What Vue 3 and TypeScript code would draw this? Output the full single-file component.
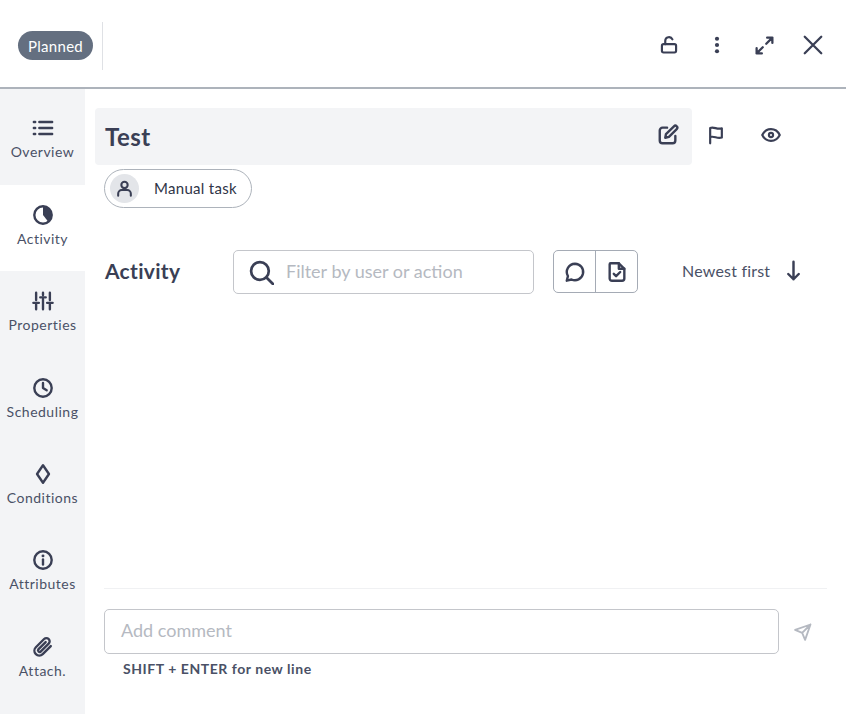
<script setup lang="ts">
const tabs: { key: string; label: string }[] = [
  { key: 'overview', label: 'Overview' },
  { key: 'activity', label: 'Activity' },
  { key: 'properties', label: 'Properties' },
  { key: 'scheduling', label: 'Scheduling' },
  { key: 'conditions', label: 'Conditions' },
  { key: 'attributes', label: 'Attributes' },
  { key: 'attach', label: 'Attach.' },
]
</script>

<template>
  <div class="page">
    <header class="header">
      <span class="status">Planned</span>
      <span class="vline"></span>
      <div class="head-actions">
        <svg class="hi lock" viewBox="0 0 24 24"><rect x="3.500" y="11" width="17" height="10" rx="2" /><path d="M7.500 11V7a4.500 4.500 0 0 1 8.600-1.800" /></svg>
        <svg class="hi dots" viewBox="0 0 24 24"><circle cx="12" cy="4.500" r="2.500" /><circle cx="12" cy="12" r="2.500" /><circle cx="12" cy="19.500" r="2.500" /></svg>
        <svg class="hi expand" viewBox="0 0 24 24"><path d="M14 10l7-7M15 3h6v6M10 14l-7 7M3 15v6h6" /></svg>
        <svg class="hi close" viewBox="0 0 24 24"><path d="M3 3l18 18M21 3L3 21" /></svg>
      </div>
    </header>
    <div class="body">
      <nav class="side">
        <div v-for="t in tabs" :key="t.key" class="tab" :class="{ active: t.key === 'activity', first: t.key === 'overview' }">
          <svg class="ti" viewBox="0 0 24 24">
            <template v-if="t.key === 'overview'">
              <path d="M8 5.500h14M8 12h14M8 18.500h14" /><path d="M2 5.500h1.500M2 12h1.500M2 18.500h1.500" />
            </template>
            <template v-else-if="t.key === 'activity'">
              <circle cx="12" cy="12" r="9.500" /><path class="fill" d="M12 3v9l5.500 7a9 9 0 0 0 3.500-7 9 9 0 0 0-9-9z" />
            </template>
            <template v-else-if="t.key === 'properties'">
              <path d="M4.500 3v8M4.500 15.500V21M12 3v2.500M12 10v11M19.500 3v8M19.500 15.500V21M1.500 14h6M9 8h6M16.500 14h6" />
            </template>
            <template v-else-if="t.key === 'scheduling'">
              <circle cx="12" cy="12" r="9.500" /><path d="M12 6.500V12l4 2.500" />
            </template>
            <template v-else-if="t.key === 'conditions'">
              <path d="M12 2.500L18.500 12 12 21.500 5.500 12z" />
            </template>
            <template v-else-if="t.key === 'attributes'">
              <circle cx="12" cy="12" r="9.500" /><path d="M12 11.500V17" /><circle class="fill" cx="12" cy="7.500" r="1.600" />
            </template>
            <template v-else>
              <path d="M20.500 11l-8.800 8.800a5.300 5.300 0 0 1-7.500-7.500l9-9a3.500 3.500 0 0 1 5 5l-8.800 8.800a1.800 1.800 0 0 1-2.500-2.500l8-8" />
            </template>
          </svg>
          <span class="tl">{{ t.label }}</span>
        </div>
      </nav>
      <main class="main">
        <div class="title-row">
          <div class="title-bar">
            <span class="title">Test</span>
            <svg class="ai edit" viewBox="0 0 24 24"><path d="M11 4H6a3 3 0 0 0-3 3v11a3 3 0 0 0 3 3h11a3 3 0 0 0 3-3v-5" /><path d="M9 15l.8-4L18.500 2.500a2 2 0 0 1 3 3L13 14z" /></svg>
          </div>
          <svg class="ai flag" viewBox="0 0 24 24"><path d="M5 22V3.500c5-2 8 2.500 14 .5v11c-6 2-9-2.500-14-.5" /></svg>
          <svg class="ai eye" viewBox="0 0 24 24"><path d="M1.500 12C4 7 8 5 12 5s8 2 10.500 7C20 17 16 19 12 19s-8-2-10.500-7z" /><circle cx="12" cy="12" r="2.500" /></svg>
        </div>
        <div class="chip">
          <span class="avatar"><svg class="user" viewBox="0 0 24 24"><circle cx="12" cy="7.500" r="4" /><path d="M4 21v-2.500A4.500 4.500 0 0 1 8.500 14h7a4.500 4.500 0 0 1 4.500 4.500V21" /></svg></span>
          <span class="chip-text">Manual task</span>
        </div>
        <div class="activity-row">
          <span class="h2">Activity</span>
          <div class="search">
            <svg class="si" viewBox="0 0 24 24"><circle cx="10.500" cy="10.500" r="8.500" /><path d="M17 17l6 6" /></svg>
            <span class="ph">Filter by user or action</span>
          </div>
          <div class="toggle">
            <span class="tbtn"><svg class="ai small" viewBox="0 0 24 24"><path d="M12 3a9 9 0 1 1-3.800 17.200L3 21.500l1.300-5A9 9 0 0 1 12 3z" /></svg></span>
            <span class="tbtn second"><svg class="ai small" viewBox="0 0 24 24"><path d="M5 2.500h9l6 6V19a2.500 2.500 0 0 1-2.500 2.500h-11A2.500 2.500 0 0 1 4 19V3.500a1 1 0 0 1 1-1z" /><path d="M14 2.500V8.500h6M8.500 14l2.500 2.500 4.500-4.500" /></svg></span>
          </div>
          <span class="sort">Newest first</span>
          <svg class="arrow" viewBox="0 0 24 24"><path d="M12 2v20M6 16l6 6 6-6" /></svg>
        </div>
        <div class="spacer"></div>
        <div class="composer">
          <div class="input-row">
            <div class="input">Add comment</div>
            <svg class="send" viewBox="0 0 24 24"><path d="M2.500 9.500L21 3l-6.500 18.500-3.500-8.500zM11 13l10-10" /></svg>
          </div>
          <div class="hint">SHIFT + ENTER for new line</div>
        </div>
      </main>
    </div>
  </div>
</template>

<style>
html, body { margin: 0; background: #fff; }
</style>

<style scoped>
.page {
  width: 846px;
  height: 714px;
  display: flex;
  flex-direction: column;
  overflow: hidden;
  font-family: Lato, "Liberation Sans", sans-serif;
  color: #3a3f55;
  background: #fff;
}
svg { fill: none; stroke: #3a3f55; stroke-width: 2.600; stroke-linecap: round; stroke-linejoin: round; flex: none; display: block; }
svg circle.fill, svg path.fill { fill: #3a3f55; stroke: none; }
.header {
  height: 87px;
  flex: none;
  border-bottom: 2px solid #adb3bb;
  display: flex;
  align-items: center;
  padding-left: 18px;
}
.status {
  height: 29px;
  line-height: 31px;
  width: 75px;
  text-align: center;
  border-radius: 15px;
  background: #646f80;
  color: #fff;
  font-size: 15px;
  letter-spacing: .3px;
  margin-top: 4px;
}
.vline { width: 1px; height: 48px; background: #dfe1e5; margin-left: 9px; margin-top: 5px; }
.head-actions { margin-left: auto; display: flex; align-items: center; margin-right: 22px; margin-top: 3px; }
.hi { width: 22px; height: 22px; }
.lock { width: 20px; height: 20px; }
.dots { margin-left: 28px; width: 20px; height: 20px; stroke: none; fill: #3a3f55; }
.expand { margin-left: 27px; width: 21px; height: 21px; }
.close { margin-left: 27px; width: 22px; height: 22px; stroke-width: 2.500; }
.body { flex: 1; display: flex; min-height: 0; }
.side { width: 85px; flex: none; background: #f3f4f6; display: flex; flex-direction: column; }
.tab {
  height: 86.330px;
  flex: none;
  box-sizing: border-box;
  padding-top: 19px;
  display: flex;
  flex-direction: column;
  align-items: center;
}
.tab.first { height: 96px; padding-top: 28px; }
.tab.active { background: #fff; }
.ti { width: 22px; height: 22px; }
.tl { font-size: 14px; letter-spacing: .5px; line-height: 20px; margin-top: 3px; color: #4a5166; }
.main { flex: 1; min-width: 0; display: flex; flex-direction: column; padding: 19px 19px 0 10px; }
.title-row { display: flex; align-items: center; height: 57px; flex: none; }
.title-bar {
  width: 597px;
  height: 57px;
  background: #f3f4f6;
  border-radius: 4px;
  display: flex;
  align-items: center;
  padding: 0 13px 0 10px;
  box-sizing: border-box;
}
.title { font-size: 24px; font-weight: 700; letter-spacing: .5px; flex: 1; color: #3a3f55; }
.ai { width: 20px; height: 20px; }
.title-bar .edit { width: 22px; height: 22px; margin-top: -3px; }
.flag { margin-left: 14px; margin-top: -3px; }
.eye { margin-left: 35px; margin-top: -3px; }
.chip {
  margin: 4px 0 0 9px;
  width: 148px;
  height: 39px;
  flex: none;
  box-sizing: border-box;
  border: 1px solid #adb3bb;
  border-radius: 20px;
  display: flex;
  align-items: center;
  padding-left: 5px;
}
.avatar { width: 29px; height: 29px; border-radius: 50%; background: #e3e5e9; display: flex; align-items: center; justify-content: center; }
.user { width: 19px; height: 19px; }
.chip-text { font-size: 15px; letter-spacing: .3px; margin-left: 15px; margin-top: -2px; color: #2f3447; }
.activity-row { display: flex; align-items: center; margin: 42px 0 0 9px; height: 44px; flex: none; }
.h2 { font-size: 21px; font-weight: 700; letter-spacing: .3px; width: 128px; margin-left: 1px; margin-top: -3px; }
.search {
  width: 301px;
  height: 44px;
  box-sizing: border-box;
  border: 1px solid #c4c6cb;
  border-radius: 5px;
  display: flex;
  align-items: center;
  padding-left: 15px;
}
.si { width: 25px; height: 25px; stroke-width: 2.600; }
.ph { font-size: 18px; color: #b5b9c1; margin-left: 12px; margin-top: -2px; }
.toggle { margin-left: 19px; display: flex; height: 43px; width: 85px; box-sizing: border-box; border: 1px solid #a5abb5; border-radius: 5px; margin-top: -1px; }
.tbtn { flex: 1; display: flex; align-items: center; justify-content: center; }
.tbtn.second { border-left: 1px solid #a5abb5; }
.small { width: 22px; height: 22px; }
.sort { font-size: 16px; letter-spacing: .2px; margin-left: 44px; margin-top: -3px; color: #4a5166; }
.arrow { width: 21px; height: 21px; margin-left: 13px; margin-top: -3px; stroke-width: 2.800; }
.spacer { flex: 1; }
.composer { margin-left: 9px; border-top: 1px solid #f0f1f3; padding-top: 20px; height: 126px; flex: none; box-sizing: border-box; }
.input-row { display: flex; align-items: center; }
.input {
  width: 675px;
  height: 45px;
  box-sizing: border-box;
  border: 1px solid #c4c6cb;
  border-radius: 5px;
  padding-left: 16px;
  line-height: 41px;
  font-size: 18px;
  color: #b5b9c1;
}
.send { width: 20px; height: 20px; margin-left: 14px; stroke: #b5b9c1; stroke-width: 2.200; }
.hint { margin: 7px 0 0 19px; font-size: 14px; font-weight: 700; letter-spacing: .55px; color: #4a5166; line-height: 16px; }
</style>
